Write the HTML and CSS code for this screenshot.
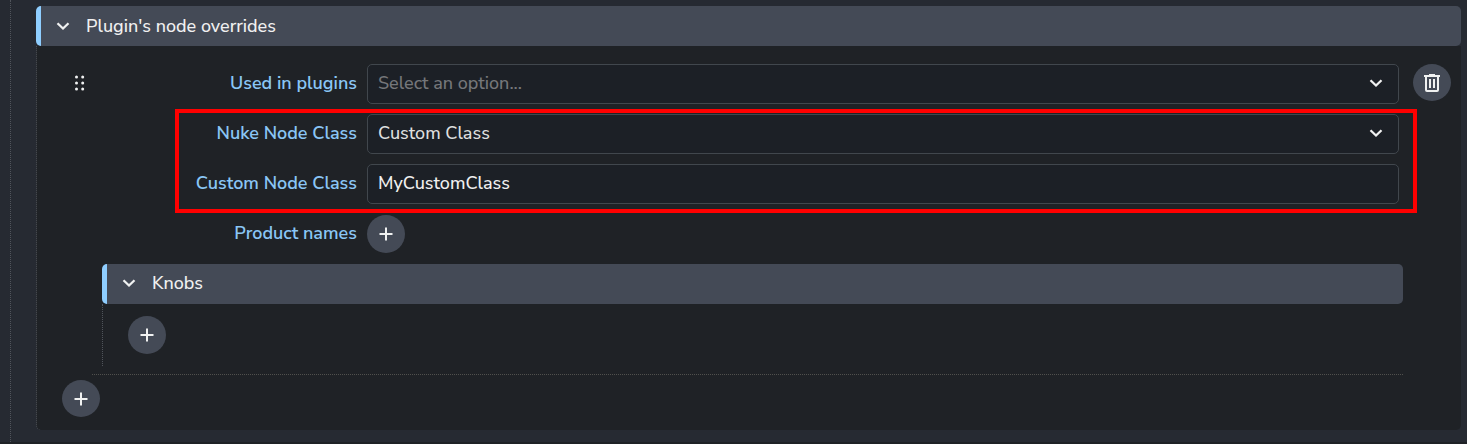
FILE: index.html
```html
<!DOCTYPE html>
<html lang="en">
<head>
<meta charset="utf-8">
<title>Plugin's node overrides</title>
<link rel="stylesheet" href="styles.css">
</head>
<body>
<svg class="symbols" width="0" height="0" aria-hidden="true">
  <symbol id="chevron" viewBox="0 0 24 24"><path d="M7.3 8.5 12 13.1l4.7-4.6L18.3 10 12 16.1 5.7 10z"/></symbol>
  <symbol id="plus" viewBox="0 0 24 24"><path d="M18.5 13H13v5.5h-2V13H5.500v-2H11V5.500h2V11h5.500z"/></symbol>
  <symbol id="grip" viewBox="0 0 24 24"><circle cx="8.500" cy="6" r="1.500"/><circle cx="14.700" cy="6" r="1.500"/><circle cx="8.500" cy="12" r="1.500"/><circle cx="14.700" cy="12" r="1.500"/><circle cx="8.500" cy="18" r="1.500"/><circle cx="14.700" cy="18" r="1.500"/></symbol>
  <symbol id="trash" viewBox="0 0 24 24"><path fill-rule="evenodd" d="M9 3h6v1h5v2h-1v13a2 2 0 0 1-2 2H7a2 2 0 0 1-2-2V6H4V4h5zM7 6v13h10V6zm2 2h2v9H9zm4 0h2v9h-2z"/></symbol>
</svg>
<main class="settings">
  <section class="branch">
    <div class="group">
      <header class="group-header"><svg class="icon"><use href="#chevron"/></svg><span>Plugin's node overrides</span></header>
      <div class="group-body">
        <div class="entry">
          <svg class="icon grip"><use href="#grip"/></svg>
          <div class="fields">
            <div class="row"><label>Used in plugins</label><div class="input placeholder"><span>Select an option...</span><svg class="icon"><use href="#chevron"/></svg></div></div>
            <div class="row"><label>Nuke Node Class</label><div class="input select"><span>Custom Class</span><svg class="icon"><use href="#chevron"/></svg></div></div>
            <div class="row"><label>Custom Node Class</label><div class="input"><span>MyCustomClass</span></div></div>
            <div class="row"><label>Product names</label><button class="round"><svg class="icon"><use href="#plus"/></svg></button></div>
            <div class="highlight"></div>
          </div>
          <button class="round delete"><svg class="icon"><use href="#trash"/></svg></button>
        </div>
        <div class="knobs">
          <header class="group-header"><svg class="icon"><use href="#chevron"/></svg><span>Knobs</span></header>
          <div class="knobs-body"><button class="round"><svg class="icon"><use href="#plus"/></svg></button></div>
        </div>
        <div class="divider"></div>
        <button class="round add-entry"><svg class="icon"><use href="#plus"/></svg></button>
      </div>
    </div>
  </section>
</main>
</body>
</html>
```
FILE: styles.css
```css
* { box-sizing: border-box; }
body {
  margin: 0;
  height: 444px;
  overflow: hidden;
  background: #1f2226;
  color: #f0f0f0;
  font: 500 18px/24px "Nunito Sans", Nunito, Lato, sans-serif;
}
.symbols { position: absolute; }
.settings { height: 442px; padding-left: 10px; background: #262a32; }
.branch { height: 442px; padding: 6px 6px 0 25px; border-left: 1px dotted #50545b; }
.group-header {
  display: flex;
  align-items: center;
  gap: 11px;
  height: 40px;
  padding-left: 10px;
  border-left: 5px solid #8fceff;
  border-radius: 5px;
  background: #444a56;
}
.icon { width: 24px; height: 24px; flex: none; fill: #f0f1f1; }
.group-body {
  height: 384px;
  padding-top: 18px;
  border-left: 1px dotted #50545b;
  border-radius: 0 0 5px 5px;
  background: #1f2226;
}
.entry { display: flex; height: 200px; padding-left: 31px; }
.grip { margin-top: 7px; }
.fields {
  position: relative;
  display: flex;
  flex-direction: column;
  gap: 10px;
  width: 1307px;
}
.row { display: flex; align-items: center; gap: 10px; height: 40px; }
.row label {
  width: 265px;
  padding-bottom: 2px;
  color: #8ac6f5;
  font-weight: 600;
  text-align: right;
  white-space: nowrap;
}
.input {
  display: flex;
  align-items: center;
  justify-content: space-between;
  width: 1032px;
  height: 40px;
  padding: 0 10px 2px;
  border: 1px solid #41474d;
  border-radius: 5px;
  background: #1c2026;
}
.select { color: #dedfdf; }
.placeholder { color: #75777a; }
.highlight {
  position: absolute;
  left: 83px;
  top: 45px;
  width: 1242px;
  height: 104px;
  border: 4px solid #f00;
}
.round {
  display: flex;
  align-items: center;
  justify-content: center;
  width: 38px;
  height: 38px;
  padding: 0;
  border: 0;
  border-radius: 50%;
  background: #444a56;
}
.row .round { padding-bottom: 1px; }
.delete { height: 37px; margin-left: 14px; }
.knobs { width: 1301px; margin-left: 65px; }
.knobs .group-header { padding-bottom: 2px; }
.knobs-body { height: 62px; padding: 12px 0 0 25px; border-left: 1px dotted #50545b; }
.divider { width: 1311px; margin: 8px 0 5px 55px; border-top: 1px dotted #50504d; }
.add-entry { height: 37px; margin-left: 25px; }
```
